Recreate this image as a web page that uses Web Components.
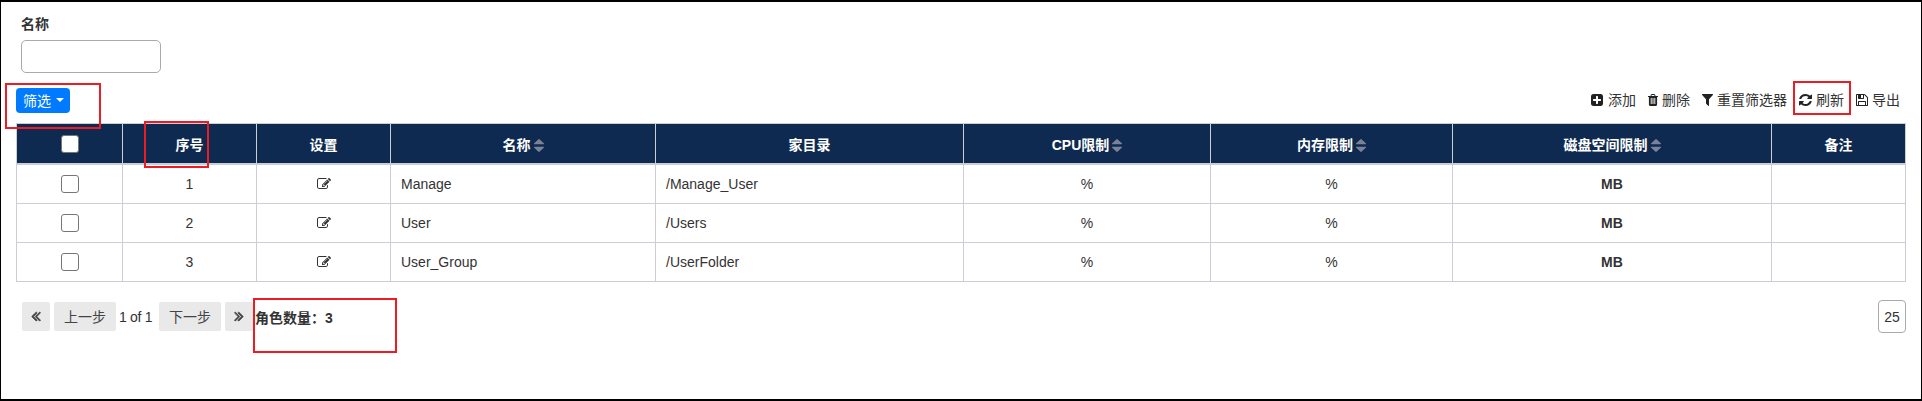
<!DOCTYPE html>
<html lang="zh">
<head>
<meta charset="utf-8">
<title>角色</title>
<style>
  html, body { margin: 0; background: #fff; }
  body { font: 14px "Liberation Sans", "Noto Sans CJK SC", sans-serif; color: #333; }
</style>
</head>
<body>
<role-page>
  <filter-field label="名称"></filter-field>
  <table-toolbar></table-toolbar>
  <role-table></role-table>
  <table-pager count="3"></table-pager>
  <red-box style="--x:5px;--y:83px;--w:96px;--h:46px"></red-box>
  <red-box style="--x:144px;--y:121px;--w:65px;--h:47px"></red-box>
  <red-box style="--x:1793px;--y:81px;--w:58px;--h:34px"></red-box>
  <red-box style="--x:253px;--y:298px;--w:144px;--h:55px"></red-box>
</role-page>

<script>
const ICONS = {
  plus: 'M1408 960v-128q0-26-19-45t-45-19h-320v-320q0-26-19-45t-45-19h-128q-26 0-45 19t-19 45v320h-320q-26 0-45 19t-19 45v128q0 26 19 45t45 19h320v320q0 26 19 45t45 19h128q26 0 45-19t19-45v-320h320q26 0 45-19t19-45zm256-544v960q0 119-84.5 203.5t-203.5 84.5h-960q-119 0-203.5-84.5t-84.5-203.5v-960q0-119 84.5-203.5t203.5-84.5h960q119 0 203.5 84.5t84.5 203.5z',
  trash: 'M704 1376v-704q0-14-9-23t-23-9h-64q-14 0-23 9t-9 23v704q0 14 9 23t23 9h64q14 0 23-9t9-23zm256 0v-704q0-14-9-23t-23-9h-64q-14 0-23 9t-9 23v704q0 14 9 23t23 9h64q14 0 23-9t9-23zm256 0v-704q0-14-9-23t-23-9h-64q-14 0-23 9t-9 23v704q0 14 9 23t23 9h64q14 0 23-9t9-23zm-544-992h448l-48-117q-7-9-17-11h-317q-10 2-17 11zm928 32v64q0 14-9 23t-23 9h-96v948q0 83-47 143.5t-113 60.5h-832q-66 0-113-58.5t-47-141.5v-952h-96q-14 0-23-9t-9-23v-64q0-14 9-23t23-9h309l70-167q15-37 54-63t79-26h320q40 0 79 26t54 63l70 167h309q14 0 23 9t9 23z',
  filter: 'M1595 295q17 41-14 70l-493 493v742q0 42-39 59-13 5-25 5-27 0-45-19l-256-256q-19-19-19-45v-486l-493-493q-31-29-14-70 17-39 59-39h1280q42 0 59 39z',
  refresh: 'M1639 1056q0 5-1 7-64 268-268 434.5t-478 166.5q-146 0-282.5-55t-243.5-157l-129 129q-19 19-45 19t-45-19-19-45v-448q0-26 19-45t45-19h448q26 0 45 19t19 45-19 45l-137 137q71 66 161 102t187 36q134 0 250-65t186-179q11-17 53-117 8-23 30-23h192q13 0 22.5 9.5t9.5 22.5zm25-800v448q0 26-19 45t-45 19h-448q-26 0-45-19t-19-45 19-45l138-138q-148-137-349-137-134 0-250 65t-186 179q-11 17-53 117-8 23-30 23h-199q-13 0-22.5-9.5t-9.5-22.5v-7q65-268 270-434.5t480-166.5q146 0 284 55.5t245 156.5l130-129q19-19 45-19t45 19 19 45z',
  save: 'M512 1536h768v-384h-768v384zm896 0h128v-896q0-14-10-38.5t-20-34.5l-281-281q-10-10-34-20t-39-10v416q0 40-28 68t-68 28h-576q-40 0-68-28t-28-68v-416h-128v1280h128v-416q0-40 28-68t68-28h832q40 0 68 28t28 68v416zm-384-928v-320q0-13-9.5-22.5t-22.5-9.5h-192q-13 0-22.5 9.5t-9.5 22.5v320q0 13 9.5 22.5t22.5 9.5h192q13 0 22.5-9.5t9.5-22.5zm640 32v928q0 40-28 68t-68 28h-1344q-40 0-68-28t-28-68v-1344q0-40 28-68t68-28h928q40 0 88 20t76 48l280 280q28 28 48 76t20 88z',
  edit: 'M888 1184l116-116-152-152-116 116v56h96v96h56zm440-720q-16-16-33 1l-350 350q-17 17-1 33t33-1l350-350q17-17 1-33zm80 594v190q0 119-84.5 203.5t-203.5 84.5h-832q-119 0-203.5-84.5t-84.5-203.5v-832q0-119 84.5-203.5t203.5-84.5h832q63 0 117 25 15 7 18 23 3 17-9 29l-49 49q-14 14-32 8-23-6-45-6h-832q-66 0-113 47t-47 113v832q0 66 47 113t113 47h832q66 0 113-47t47-113v-126q0-13 9-22l64-64q15-15 35-7t20 29zm-96-738l288 288-672 672h-288v-288zm444 132l-92 92-288-288 92-92q28-28 68-28t68 28l152 152q28 28 28 68t-28 68z',
  first: 'M1011 1376q0 13-10 23l-50 50q-10 10-23 10t-23-10l-466-466q-10-10-10-23t10-23l466-466q10-10 23-10t23 10l50 50q10 10 10 23t-10 23l-393 393 393 393q10 10 10 23zm384 0q0 13-10 23l-50 50q-10 10-23 10t-23-10l-466-466q-10-10-10-23t10-23l466-466q10-10 23-10t23 10l50 50q10 10 10 23t-10 23l-393 393 393 393q10 10 10 23z',
  last: 'M979 960q0 13-10 23l-466 466q-10 10-23 10t-23-10l-50-50q-10-10-10-23t10-23l393-393-393-393q-10-10-10-23t10-23l50-50q10-10 23-10t23 10l466 466q10 10 10 23zm384 0q0 13-10 23l-466 466q-10 10-23 10t-23-10l-50-50q-10-10-10-23t10-23l393-393-393-393q-10-10-10-23t10-23l50-50q10-10 23-10t23 10l466 466q10 10 10 23z',
  sort: 'M1408 1088q0 26-19 45l-448 448q-19 19-45 19t-45-19l-448-448q-19-19-19-45t19-45 45-19h896q26 0 45 19t19 45zm0-384q0 26-19 45t-45 19h-896q-26 0-45-19t-19-45 19-45l448-448q19-19 45-19t45 19l448 448q19 19 19 45z'
}

function icon(name, w, h, color, box) {
  return `<svg width="${w}" height="${h}" viewBox="${box || '0 0 1792 1792'}" preserveAspectRatio="none" fill="${color}" style="flex:none"><path d="${ICONS[name]}"/></svg>`
}

class RolePage extends HTMLElement {
  constructor() {
    super()
    this.attachShadow({ mode: 'open' }).innerHTML = `
    <style>
      :host {
        display: block;
        position: relative;
        box-sizing: border-box;
        width: 1922px;
        height: 401px;
        border: 2px solid #000;
        border-width: 2px 1px 2px 1px;
        padding: 12px 15px 0 15px;
        overflow: hidden;
      }
    </style>
    <slot></slot>`
  }
}

class FilterField extends HTMLElement {
  constructor() {
    super()
    this.attachShadow({ mode: 'open' }).innerHTML = `
    <style>
      :host { display: block; padding-left: 5px; height: 74px; }
      label { display: block; height: 21px; line-height: 21px; font-size: 14px; font-weight: bold; margin-bottom: 5px; }
      .box { box-sizing: border-box; display: block; width: 140px; height: 33px; border: 1px solid #aaa; border-radius: 5px; background: #fff; }
    </style>
    <label>${this.getAttribute('label')}</label>
    <input class="box" type="text">`
  }
}

class TableToolbar extends HTMLElement {
  constructor() {
    super()
    // name, icon width, icon height, tight viewBox, gap to the label, label
    const items = [
      ['plus', 12, 12, '128 128 1536 1536', 5, '添加'],
      ['trash', 10, 12, '192 128 1408 1536', 4, '删除'],
      ['filter', 11, 12, '192 256 1408 1408', 4, '重置筛选器'],
      ['refresh', 13, 12, '128 128 1536 1536', 4, '刷新'],
      ['save', 12, 12, '128 128 1536 1536', 4, '导出']
    ]
    this.attachShadow({ mode: 'open' }).innerHTML = `
    <style>
      :host { display: flex; align-items: flex-start; justify-content: space-between; height: 35px; width: 1890px; }
      .drop {
        display: flex; align-items: center; gap: 5px; box-sizing: border-box;
        height: 25px; width: 54px; padding: 0 6px 2px 7px; border: 0; border-radius: 4px;
        background: #007bff; color: #fff; font: inherit; white-space: nowrap;
      }
      .caret { flex: none; width: 0; height: 0; border: 4px solid transparent; border-top-color: #fff; border-bottom: 0; }
      .actions { display: flex; gap: 12px; padding: 3px 6px 0 0; }
      .act { display: flex; align-items: center; line-height: 18px; white-space: nowrap; }
    </style>
    <button class="drop">筛选<span class="caret"></span></button>
    <div class="actions">
      ${items.map(i => `<span class="act" style="gap:${i[4]}px">${icon(i[0], i[1], i[2], '#222', i[3])}${i[5]}</span>`).join('')}
    </div>`
  }
}

class RoleTable extends HTMLElement {
  constructor() {
    super()
    const widths = [106, 134, 134, 265, 308, 247, 242, 319, 134]
    const rows = [
      [1, 'Manage', '/Manage_User'],
      [2, 'User', '/Users'],
      [3, 'User_Group', '/UserFolder']
    ]
    const sort = icon('sort', 10, 13, '#7a8296', '384 192 1024 1408')
    const head = ['序号', '设置', '名称' + sort, '家目录', 'CPU限制' + sort, '内存限制' + sort, '磁盘空间限制' + sort, '备注']
    this.attachShadow({ mode: 'open' }).innerHTML = `
    <style>
      :host { display: block; width: 1890px; }
      table { border-collapse: collapse; table-layout: fixed; width: 1890px; }
      th, td { border: 1px solid #ccced6; padding: 0 10px; text-align: center; }
      th { height: 39px; background: #0f2a50; color: #fff; font-weight: bold; border-bottom-width: 2px; border-color: #ccced6; }
      th svg { vertical-align: -2px; margin-left: 3px; }
      td { height: 38px; }
      .l { text-align: left; }
      .b { font-weight: bold; }
      .check { display: block; box-sizing: border-box; width: 18px; height: 18px; margin: 0 auto; border: 1px solid #767676; border-radius: 3px; background: #fff; }
      .edit { display: block; margin: -1px auto 0; }
    </style>
    <table>
      <colgroup>${widths.map(w => `<col style="width:${w}px">`).join('')}</colgroup>
      <thead><tr>
        <th><span class="check"></span></th>
        ${head.map(h => `<th>${h}</th>`).join('')}
      </tr></thead>
      <tbody>
      ${rows.map(r => `<tr>
        <td><span class="check"></span></td>
        <td>${r[0]}</td>
        <td>${icon('edit', 14, 12, '#333', '0 128 1792 1536').replace('style="', 'class="edit" style="')}</td>
        <td class="l">${r[1]}</td>
        <td class="l">${r[2]}</td>
        <td>%</td><td>%</td>
        <td class="b">MB</td>
        <td></td>
      </tr>`).join('')}
      </tbody>
    </table>`
  }
}

class TablePager extends HTMLElement {
  constructor() {
    super()
    this.attachShadow({ mode: 'open' }).innerHTML = `
    <style>
      :host { display: flex; align-items: flex-start; justify-content: space-between; box-sizing: border-box; padding: 20px 0 0 6px; width: 1890px; }
      .left { display: flex; align-items: center; }
      .btn {
        display: flex; align-items: center; justify-content: center; box-sizing: border-box;
        height: 29px; padding-bottom: 1px; border-radius: 2px; background: #e9e9e9; color: #444;
      }
      .edge { width: 28px; }
      .prev { width: 62px; margin: 0 3px 0 4px; }
      .next { width: 62px; margin: 0 4px 0 0; }
      .num { margin-right: 7px; width: 33px; white-space: nowrap; letter-spacing: -.3px; }
      .count { margin-left: 2px; font-weight: bold; white-space: nowrap; }
      .size { box-sizing: border-box; width: 28px; height: 33px; margin-top: -2px; border: 1px solid #aaa; border-radius: 4px; display: flex; align-items: center; justify-content: center; }
      .edge svg path { stroke: #444; stroke-width: 90px; }
    </style>
    <div class="left">
      <span class="btn edge">${icon('first', 16, 16, '#444')}</span>
      <span class="btn prev">上一步</span>
      <span class="num">1 of 1</span>
      <span class="btn next">下一步</span>
      <span class="btn edge">${icon('last', 16, 16, '#444')}</span>
      <span class="count">角色数量：${this.getAttribute('count')}</span>
    </div>
    <div class="size">25</div>`
  }
}

class RedBox extends HTMLElement {
  constructor() {
    super()
    this.attachShadow({ mode: 'open' }).innerHTML = `
    <style>
      :host {
        position: absolute; box-sizing: border-box;
        left: calc(var(--x) - 1px); top: calc(var(--y) - 2px);
        width: var(--w); height: var(--h);
        border: 2px solid #ed1c24; pointer-events: none;
      }
    </style>`
  }
}

customElements.define('role-page', RolePage)
customElements.define('filter-field', FilterField)
customElements.define('table-toolbar', TableToolbar)
customElements.define('role-table', RoleTable)
customElements.define('table-pager', TablePager)
customElements.define('red-box', RedBox)
</script>
</body>
</html>
